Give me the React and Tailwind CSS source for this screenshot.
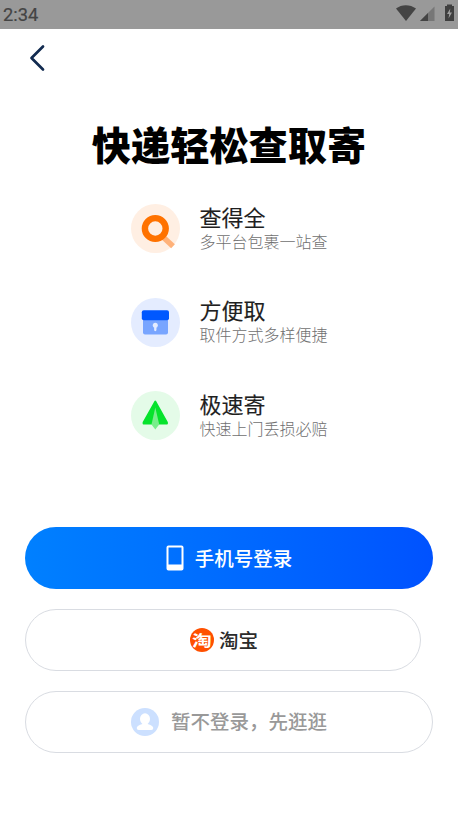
import React from "react";

function StatusBar() {
  return (
    <header className="flex h-[29px] items-center justify-between bg-[#999999] pl-[3px] pr-[3px]">
      <span className="font-[Roboto] text-[18.300px] leading-[28px] font-normal text-[#444444] [-webkit-text-stroke:0.2px_#444444]">2:34</span>
      <svg width="62" height="29" viewBox="0 0 62 29">
        <path d="M3 8.500C8.500 4 17 4 23 8.500L13 21Z" fill="#444444" />
        <path d="M41.500 6.500V21H27Z" fill="#777777" />
        <path d="M35 13V21H27Z" fill="#444444" />
        <path d="M54 6V4.500H59V6H61V21H52V6Z" fill="#3f3f3f" />
        <path d="M57.300 8.500L54 14H56.200L55.500 18.500L59 12.500H56.800Z" fill="#a0a0a0" />
      </svg>
    </header>
  );
}

function SearchIcon() {
  return (
    <svg className="size-[49px]" viewBox="0 0 49 49">
      <circle cx="24.500" cy="24.500" r="24.500" fill="#ffefe3" />
      <path d="M32 33L42 42.300" stroke="#ffb27a" strokeWidth="5.500" />
      <circle cx="24.300" cy="24.500" r="10.400" fill="none" stroke="#ff7200" strokeWidth="6.400" />
    </svg>
  );
}

function BoxIcon() {
  return (
    <svg className="size-[49px]" viewBox="0 0 49 49">
      <circle cx="24.500" cy="24.500" r="24.500" fill="#e4ecff" />
      <path d="M12 20H37V34.500Q37 36.500 35 36.500H14Q12 36.500 12 34.500Z" fill="#78a5ff" />
      <rect x="10.800" y="12.200" width="27.200" height="10" rx="2" fill="#0058ff" />
      <circle cx="24.300" cy="27.300" r="2.500" fill="#e4ecff" />
      <path d="M24.300 27V32" stroke="#e4ecff" strokeWidth="2.300" strokeLinecap="round" />
    </svg>
  );
}

function SendIcon() {
  return (
    <svg className="size-[49px]" viewBox="0 0 49 49">
      <circle cx="24.500" cy="24.500" r="24.500" fill="#e4fbe8" />
      <path d="M24.300 10.500L36 31.500V32.500H12.500V31.500Z" fill="#06e32c" stroke="#06e32c" strokeWidth="1.800" strokeLinejoin="round" />
      <path d="M24.300 16.500L28.200 33.500L24.300 38.500L20.500 33.500Z" fill="#78ee8b" />
    </svg>
  );
}

const features = [
  { Icon: SearchIcon, title: "查得全", text: "多平台包裹一站查" },
  { Icon: BoxIcon, title: "方便取", text: "取件方式多样便捷" },
  { Icon: SendIcon, title: "极速寄", text: "快速上门丢损必赔" },
];

export default function App() {
  return (
    <div className="h-[820px] w-[458px] overflow-hidden bg-white font-['Noto_Sans_CJK_SC',sans-serif]">
      <StatusBar />
      <nav className="flex h-[58px] items-center pl-[28px]">
        <svg width="20" height="30" viewBox="0 0 20 30" fill="none" stroke="#122b50" strokeWidth="2.700" strokeLinecap="round" strokeLinejoin="round">
          <path d="M15 3.500L3.500 15L15 26.500" />
        </svg>
      </nav>
      <h1 className="mt-[27px] text-center text-[39.2px] leading-[58px] font-black whitespace-nowrap text-black">快递轻松查取寄</h1>
      <ul className="mt-[32px] flex flex-col gap-[44.500px] pl-[131px]">
        {features.map(({ Icon, title, text }) => (
          <li key={title} className="flex h-[49px] items-center gap-[19.500px]">
            <Icon />
            <div className="flex flex-col pb-[1px]">
              <h2 className="text-[22px] leading-[25px] font-normal text-[#1f1f1f] [-webkit-text-stroke:0.15px_#1f1f1f]">{title}</h2>
              <p className="text-[16px] leading-[24px] font-light text-[#707070]">{text}</p>
            </div>
          </li>
        ))}
      </ul>
      <div className="mt-[87px] flex flex-col gap-5 px-[25px]">
        <button className="flex h-[62px] items-center justify-center rounded-full bg-linear-to-r from-[#0080ff] to-[#0052ff] text-[19.500px] font-medium text-white">
          <svg className="mr-[11px]" width="18" height="26" viewBox="0 0 18 26">
            <path fillRule="evenodd" d="M2.500 0.500H15.500Q17.500 0.500 17.500 2.500V23.500Q17.500 25.500 15.500 25.500H2.500Q0.500 25.500 0.500 23.500V2.500Q0.500 0.500 2.500 0.500ZM2.500 2.500V19.500H15.500V2.500Z" fill="white" />
          </svg>
          手机号登录
        </button>
        <button className="flex h-[62px] w-[396px] items-center justify-center rounded-full border border-[#d9dce2] pl-[2px] text-[19.500px] font-medium text-[#2b2b2b]">
          <span className="mr-[5px] flex size-[24px] items-center justify-center rounded-full bg-[#ff5000] pb-[2px] text-[18px] leading-none font-bold text-white">
            <span className="block scale-x-110 scale-y-85">淘</span>
          </span>
          淘宝
        </button>
        <button className="flex h-[62px] items-center justify-center rounded-full border border-[#d9dce2] text-[19.500px] font-medium text-[#999999]">
          <svg className="mr-[12px]" width="28" height="28" viewBox="0 0 28 28">
            <circle cx="14" cy="14" r="14" fill="#cce0ff" />
            <ellipse cx="14" cy="11" rx="5" ry="5.800" fill="white" />
            <path d="M11.500 14H16.500V16Q22 17.500 22.300 20Q22.300 22 20.300 22H7.700Q5.700 22 5.700 20Q6 17.500 11.500 16Z" fill="white" />
          </svg>
          <span className="pb-[2px]">暂不登录，先逛逛</span>
        </button>
      </div>
    </div>
  );
}
